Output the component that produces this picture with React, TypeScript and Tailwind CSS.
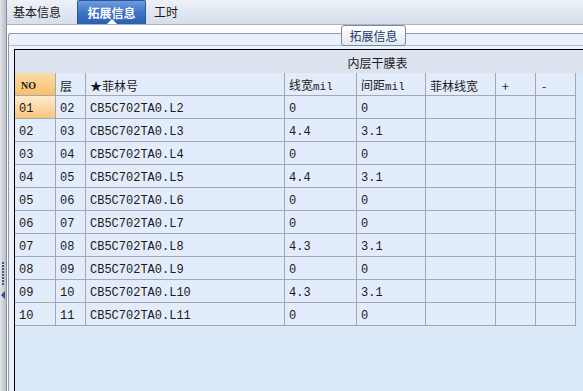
import React from 'react';

type Row = { no: string; layer: string; film: string; width: string; gap: string };

const rows: Row[] = [
  { no: '01', layer: '02', film: 'CB5C702TA0.L2', width: '0', gap: '0' },
  { no: '02', layer: '03', film: 'CB5C702TA0.L3', width: '4.4', gap: '3.1' },
  { no: '03', layer: '04', film: 'CB5C702TA0.L4', width: '0', gap: '0' },
  { no: '04', layer: '05', film: 'CB5C702TA0.L5', width: '4.4', gap: '3.1' },
  { no: '05', layer: '06', film: 'CB5C702TA0.L6', width: '0', gap: '0' },
  { no: '06', layer: '07', film: 'CB5C702TA0.L7', width: '0', gap: '0' },
  { no: '07', layer: '08', film: 'CB5C702TA0.L8', width: '4.3', gap: '3.1' },
  { no: '08', layer: '09', film: 'CB5C702TA0.L9', width: '0', gap: '0' },
  { no: '09', layer: '10', film: 'CB5C702TA0.L10', width: '4.3', gap: '3.1' },
  { no: '10', layer: '11', film: 'CB5C702TA0.L11', width: '0', gap: '0' },
];

const cjk = "font-['Noto_Sans_CJK_SC',sans-serif]";
const mono = "font-['Liberation_Mono','Noto_Sans_CJK_SC',monospace]";
const cell = 'h-[23px] border-r border-b border-[#a3a9b3] pl-[4px] pt-[3px] flex items-center overflow-hidden whitespace-nowrap';
const grid = 'grid grid-cols-[41px_30px_199px_72px_69px_70px_40px_40px] w-[561px]';

const App: React.FC = () => {
  return (
    <div className={`w-[583px] h-[391px] flex overflow-hidden bg-[#dce9fb] text-[12px] text-[#1a1a1a] ${cjk}`}>
      {/* splitter */}
      <div className="w-[7px] shrink-0 bg-gradient-to-r from-[#e2e5e9] to-[#b9bec6] border-r border-[#8a9099] flex flex-col items-center pt-[262px]">
        <div className="flex flex-col gap-[1px]">
          {Array.from({ length: 8 }).map((_, i) => (
            <span key={i} className="block w-[2px] h-[2px] bg-[#4a5a78]" />
          ))}
        </div>
        <span className="mt-[6px] block w-0 h-0 border-y-[4px] border-y-transparent border-r-[4px] border-r-[#2c4d86]" />
      </div>

      <div className="flex-1 flex flex-col min-w-0">
        {/* tab bar */}
        <div className="h-[25px] shrink-0 flex items-end bg-gradient-to-b from-[#eef2f8] to-[#d5deeb] border-b border-[#a9b6c8]">
          <div className="h-[24px] px-[6px] flex items-center">基本信息</div>
          <div className="relative h-[24px] w-[69px] ml-[10px] flex items-center justify-center rounded-t-[2px] bg-gradient-to-b from-[#6e9de0] via-[#3f73c6] to-[#2c5fb3] border border-[#2a56a0] border-b-0 text-white font-bold">
            拓展信息
            <span className="absolute bottom-0 left-1/2 -translate-x-1/2 w-0 h-0 border-x-[5px] border-x-transparent border-b-[5px] border-b-white" />
          </div>
          <div className="h-[24px] px-[8px] flex items-center">工时</div>
        </div>

        {/* body */}
        <div className="flex-1 relative bg-white pt-[8px] pl-[1px] min-h-0">
          <div className="w-[732px] h-full border-l border-t border-[#8e99aa] rounded-tl-[3px] bg-[#eaf1fa] flex flex-col">
            <div className="h-[12px] shrink-0 border-b border-[#b3bcc9]" />
            <div className="flex-1 mt-[3px] ml-[5px] border-l border-t border-black bg-[#dce9fb] flex flex-col min-h-0">
              <div className="h-[23px] shrink-0 pt-[2px] bg-[#dce3ee] flex items-center justify-center">内层干膜表</div>
              <div className={grid}>
                <div className={`${cell} bg-gradient-to-b from-[#fcdca6] to-[#f6c06c] font-['Liberation_Serif',serif] text-[10px] font-bold pl-[6px]`}>NO</div>
                <div className={`${cell} bg-[#e3ecfa]`}>层</div>
                <div className={`${cell} bg-[#e3ecfa]`}>★菲林号</div>
                <div className={`${cell} bg-[#e3ecfa]`}>
                  <span>线宽<span className={`${mono} text-[11px]`}>mil</span></span>
                </div>
                <div className={`${cell} bg-[#e3ecfa]`}>
                  <span>间距<span className={`${mono} text-[11px]`}>mil</span></span>
                </div>
                <div className={`${cell} bg-[#e3ecfa]`}>菲林线宽</div>
                <div className={`${cell} bg-[#e3ecfa] pl-[6px]`}>+</div>
                <div className={`${cell} bg-[#e3ecfa] pl-[6px]`}>-</div>
                {rows.map((r, i) => (
                  <React.Fragment key={r.no}>
                    <div className={`${cell} ${mono} ${i === 0 ? 'bg-gradient-to-b from-[#fdebd2] to-[#f8c47a]' : 'bg-[#e3ecfa]'}`}>{r.no}</div>
                    <div className={`${cell} ${mono} bg-[#e3ecfa]`}>{r.layer}</div>
                    <div className={`${cell} ${mono} bg-[#e3ecfa]`}>{r.film}</div>
                    <div className={`${cell} ${mono} bg-[#e3ecfa]`}>{r.width}</div>
                    <div className={`${cell} ${mono} bg-[#e3ecfa]`}>{r.gap}</div>
                    <div className={`${cell} bg-[#e3ecfa]`} />
                    <div className={`${cell} bg-[#e3ecfa]`} />
                    <div className={`${cell} bg-[#e3ecfa]`} />
                  </React.Fragment>
                ))}
              </div>
            </div>
          </div>
          {/* group legend */}
          <div className="absolute left-[334px] top-0 w-[65px] h-[21px] rounded-[3px] border border-[#7d8898] bg-gradient-to-b from-white to-[#e1e9f4] flex items-center justify-center text-[#1f3a66]">
            拓展信息
          </div>
        </div>
      </div>
    </div>
  );
};

export default App;
